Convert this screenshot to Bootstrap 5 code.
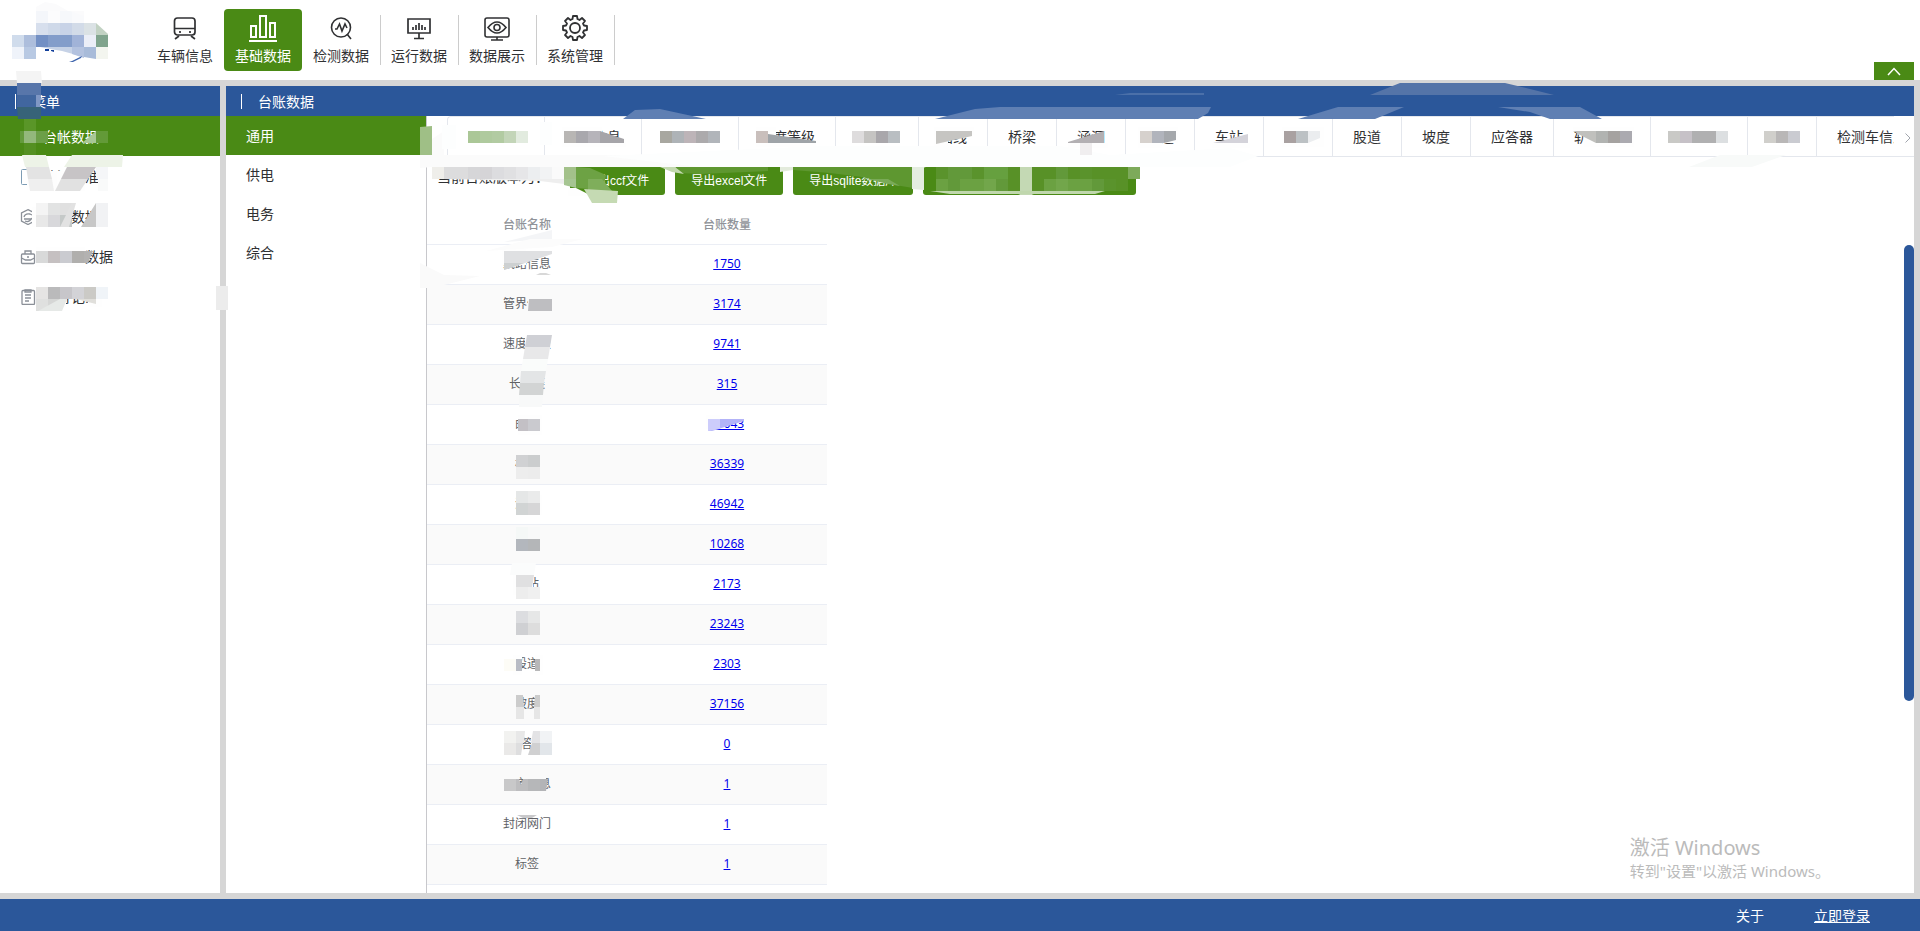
<!DOCTYPE html>
<html lang="zh-CN">
<head>
<meta charset="utf-8">
<meta name="viewport" content="width=device-width, initial-scale=1">
<title>台账数据</title>
<link rel="stylesheet" href="https://cdn.jsdelivr.net/npm/bootstrap@5.3.0/dist/css/bootstrap.min.css">
<style>
:root{--blue:#2b579a;--green:#4a8a15;--frame:#d6d6d6;--line:#e4e7ed}
body{font-family:"Noto Sans","Noto Sans CJK SC",sans-serif;font-size:14px;line-height:20px;color:#303133;background:#fff}
a{color:inherit;text-decoration:none}
.top-bar{height:80px;padding:9px 6px 0 146px}
.main-nav a{width:78px;height:62px;padding-top:5px;position:relative}
.main-nav a svg{width:28px;height:28px;margin-bottom:4px}
.main-nav a.on{background:var(--green);color:#fff;border-radius:4px}
.main-nav a.sep::after{content:"";position:absolute;right:-1px;top:6px;height:50px;width:1px;background:#ccc}
.fold-btn{width:40px;height:18px;background:var(--green)}
.work{background:var(--frame);padding:6px 6px 6px 0;gap:6px;min-height:0}
.side{width:220px}
.pane{min-width:0;min-height:0}
.panel-head{height:30px;background:var(--blue);color:#fff;padding:1px 0 0 15px}
.panel-head::before{content:"";width:1px;height:15px;background:#fff;margin-right:16px}
.side-link{height:40px;padding:2px 0 0 20px}
.side-link svg{width:16px;height:16px;margin-right:7px;color:#8b9098}
.side-link.on,.cat-link.on{background:var(--green);color:#fff}
.cats{width:201px;border-right:1px solid #c8c8cc}
.cat-link{height:39px;padding-left:20px}
.tabs{height:41px;padding:0 20px;border-bottom:1px solid var(--line)}
.tab-strip{border:1px solid var(--line);border-width:1px 0 0 1px;border-top-left-radius:4px}
.tab-strip a{padding:5px 20px 0;line-height:30px;white-space:nowrap;border-left:1px solid var(--line);flex:none}
.tab-strip a:first-child{border-left:0;min-width:96px}
.w4{min-width:97px}.w3{min-width:83px}.w2{min-width:69px}
.tab-more{right:2px;top:16px}
.tool-row{padding:10px 10px 0;height:47px}
.tool-row .ver{width:133px}
.act{height:28px;border:0;border-radius:3px;background:var(--green);color:#fff;font:12px/12px "Liberation Sans","Noto Sans CJK SC",sans-serif;padding:0 16px}
.act-m{width:98px}.act-l{width:105px}
.acts{gap:10px}
.ledger{width:400px;font-size:12px;color:#606266;table-layout:fixed}
.ledger th,.ledger td{height:40px;padding:0;text-align:center;vertical-align:middle;border-bottom:1px solid #ebeef5}
.ledger th{color:#909399;font-weight:500;padding-top:2px}
.ledger tbody tr:nth-child(even){background:#fafafa}
.ledger a{color:#00e;text-decoration:underline}
.thumb{width:10px;height:456px;border-radius:5px;background:var(--blue);right:0;top:159px}
.tip{right:84px;bottom:11px;color:#bbb;font-size:15px;line-height:22px}
.tip strong{display:block;font-size:20px;line-height:24px;font-weight:400}
.foot{height:32px;background:var(--blue);color:#fff;padding:2px 50px 0 0;gap:50px}
.foot a:last-child{text-decoration:underline}
.veil{left:0;top:0;width:1920px;height:931px;pointer-events:none;z-index:5}
</style>
</head>
<body class="vh-100 d-flex flex-column overflow-hidden position-relative">
<header class="top-bar d-flex justify-content-between flex-shrink-0">
  <nav class="main-nav d-flex text-center">
    <a href="#"><svg viewBox="0 0 28 28" fill="none" stroke="currentColor" stroke-width="1.700"><rect x="3.500" y="4" width="20.500" height="17" rx="3"/><path d="M4 14.500h20M8 22l-4 3M20 22l4 3"/><path d="M9 17v2M19 17v2"/></svg><br>车辆信息</a>
    <a href="#" class="on"><svg viewBox="0 0 28 28" fill="none" stroke="currentColor" stroke-width="2"><path d="M2 12h5v11H2zM11 2h6v21h-6zM21 9h5v14h-5zM0 27h28"/></svg><br>基础数据</a>
    <a href="#" class="sep"><svg viewBox="0 0 28 28" fill="none" stroke="currentColor" stroke-width="1.6"><circle cx="14" cy="13.500" r="9.500"/><path d="M8 15h2l2.500-5 2.500 7 3-7 2 4M20 20l4 5"/></svg><br>检测数据</a>
    <a href="#" class="sep"><svg viewBox="0 0 28 28" fill="none" stroke="currentColor" stroke-width="1.700"><path d="M3 5h22v14H3zM14 19v5M9 24.500h10M8 13v3M11 11v5M14 9v7M17 11v5M20 13v3"/></svg><br>运行数据</a>
    <a href="#" class="sep"><svg viewBox="0 0 28 28" fill="none" stroke="currentColor" stroke-width="1.600"><rect x="2" y="4" width="24" height="19" rx="2"/><path d="M14 23v3M8 26h12M5 13.500q9-11 18 0q-9 11-18 0z"/><circle cx="14" cy="13.500" r="3"/></svg><br>数据展示</a>
    <a href="#" class="sep"><svg viewBox="0 0 28 28" fill="none" stroke="currentColor" stroke-width="1.800" stroke-linejoin="round"><path d="M11.500 5 12 2h4l.5 3 2 1 2.500-2 3 3-2 2.500 1 2 3 .5v4l-3 .5-1 2 2 2.500-3 3-2.500-2-2 1-.5 3h-4l-.5-3-2-1-2.500 2-3-3 2-2.500-1-2-3-.5v-4l3-.5 1-2-2-2.500 3-3 2.500 2z"/><circle cx="14" cy="14" r="5"/></svg><br>系统管理</a>
  </nav>
  <button class="fold-btn border-0 p-0 align-self-end d-flex align-items-center justify-content-center" aria-label="收起"><svg width="16" height="10" fill="none" stroke="#fff" stroke-width="1.500"><path d="m2 9 6-6.500L14 9"/></svg></button>
</header>

<main class="work d-flex flex-grow-1">
  <aside class="side bg-white flex-shrink-0">
    <div class="panel-head d-flex align-items-center">菜单</div>
    <a href="#" class="side-link on d-flex align-items-center"><svg></svg>台帐数据</a>
    <a href="#" class="side-link d-flex align-items-center"><svg viewBox="0 0 16 16" fill="none" stroke="#7d9cb4"><rect x="1.500" y=".5" width="12" height="15" rx="1"/></svg>检测标准</a>
    <a href="#" class="side-link d-flex align-items-center"><svg viewBox="0 0 16 16" fill="none" stroke="currentColor" stroke-width="1.300"><path d="M8 .7 14.500 4v8L8 15.500 1.500 12V4zM4 8q1-4 6-3l2 1M4 10h7M5 12q4 2 7-3"/></svg>检修数据</a>
    <a href="#" class="side-link d-flex align-items-center"><svg viewBox="0 0 16 16" fill="none" stroke="currentColor" stroke-width="1.300"><rect x="1.500" y="5" width="13" height="9.500" rx="1"/><path d="M5 5V2h6v3M1.500 9l4 2h5l4-2M7 8h2"/></svg>动检车数据</a>
    <a href="#" class="side-link d-flex align-items-center"><svg viewBox="0 0 16 16" fill="none" stroke="currentColor" stroke-width="1.300"><rect x="2" y="1.500" width="12.500" height="14" rx="1"/><path d="M5 1h6v2H5zM5 6h6M5 9h6M5 12h4"/></svg>运行记录</a>
  </aside>
  <section class="pane bg-white flex-grow-1 d-flex flex-column position-relative">
    <div class="panel-head d-flex align-items-center flex-shrink-0">台账数据</div>
    <div class="pane d-flex flex-grow-1">
      <nav class="cats flex-shrink-0">
        <a href="#" class="cat-link on d-flex align-items-center">通用</a>
        <a href="#" class="cat-link d-flex align-items-center">供电</a>
        <a href="#" class="cat-link d-flex align-items-center">电务</a>
        <a href="#" class="cat-link d-flex align-items-center">综合</a>
      </nav>
      <div class="pane flex-grow-1 overflow-hidden">
        <div class="tabs position-relative">
          <nav class="tab-strip d-flex overflow-hidden h-100">
            <a href="#" aria-label="总览"></a><a href="#">管界信息</a><a href="#" class="w4" aria-label="线路"></a><a href="#">速度等级</a><a href="#" class="w3" aria-label="长短链"></a><a href="#">曲线</a><a href="#">桥梁</a><a href="#">涵洞</a><a href="#">隧道</a><a href="#">车站</a><a href="#">道岔</a><a href="#">股道</a><a href="#">坡度</a><a href="#">应答器</a><a href="#">轨道信息</a><a href="#" class="w4" aria-label="封闭网门"></a><a href="#" class="w2" aria-label="标签"></a><a href="#">检测车信息</a>
          </nav>
          <svg class="tab-more position-absolute" width="8" height="12" fill="none" stroke="#a0a4ac"><path d="m1.500 1.500 4.500 4.500-4.500 4.500"/></svg>
        </div>
        <div class="tool-row d-flex align-items-start">
          <span class="ver">当前台账版本为：</span>
          <div class="acts d-flex">
            <button class="act">导出ccf文件</button><button class="act">导出excel文件</button><button class="act">导出sqlite数据库</button><button class="act act-m" aria-label="导入"></button><button class="act act-l" aria-label="更新"></button>
          </div>
        </div>
        <table class="ledger">
          <thead><tr><th>台账名称</th><th>台账数量</th></tr></thead>
          <tbody>
            <tr><td>线路信息</td><td><a href="#">1750</a></td></tr>
            <tr><td>管界信息</td><td><a href="#">3174</a></td></tr>
            <tr><td>速度等级</td><td><a href="#">9741</a></td></tr>
            <tr><td>长短链</td><td><a href="#">315</a></td></tr>
            <tr><td>曲线</td><td><a href="#">27643</a></td></tr>
            <tr><td>桥梁</td><td><a href="#">36339</a></td></tr>
            <tr><td>涵洞</td><td><a href="#">46942</a></td></tr>
            <tr><td>隧道</td><td><a href="#">10268</a></td></tr>
            <tr><td>车站</td><td><a href="#">2173</a></td></tr>
            <tr><td>道岔</td><td><a href="#">23243</a></td></tr>
            <tr><td>股道</td><td><a href="#">2303</a></td></tr>
            <tr><td>坡度</td><td><a href="#">37156</a></td></tr>
            <tr><td>应答器</td><td><a href="#">0</a></td></tr>
            <tr><td>轨道信息</td><td><a href="#">1</a></td></tr>
            <tr><td>封闭网门</td><td><a href="#">1</a></td></tr>
            <tr><td>标签</td><td><a href="#">1</a></td></tr>
          </tbody>
        </table>
      </div>
    </div>
    <div class="thumb position-absolute"></div>
    <div class="tip position-absolute"><strong>激活 Windows</strong>转到"设置"以激活 Windows。</div>
  </section>
</main>
<footer class="foot d-flex align-items-center justify-content-end flex-shrink-0"><a href="#">关于</a><a href="#">立即登录</a></footer>

<svg class="veil position-absolute" id="veil" aria-hidden="true"></svg>
<script src="https://cdn.jsdelivr.net/npm/bootstrap@5.3.0/dist/js/bootstrap.bundle.min.js"></script>
<script>
// Redaction layer, painted in order: plain cover boxes [x, y, w, h, colour],
// smears, runs of 12px mosaic cells [x, y, colours], then free polygons [colour, points].
const covers = [
 [31,84,9,22,'41669f'],[50,171,12,20,'fdfdfd'],[57,171,28,20,'fefefe'],[27,168,14,22,'fefefe'],
 [32,207,38,20,'fefefe'],[36,247,49,20,'fefefe'],[36,287,30,20,'fefefe'],[66,287,34,12,'fefefe'],[88,299,14,8,'fefefe'],
 [562,127,40,20,'fefefe'],[602,139,24,8,'fefefe'],[756,127,20,20,'fefefe'],[776,141,40,6,'fefefe'],[934,127,40,8,'fefefe'],[934,135,14,12,'fefefe'],
 [1068,143,40,5,'fefefe'],[1138,127,40,16,'fefefe'],[1138,143,24,5,'fefefe'],[1212,143,38,5,'fefefe'],[1282,127,42,20,'fefefe'],[1584,127,50,20,'fefefe'],[1573,127,11,4,'fefefe'],
 [502,249,24,16,'fefefe'],[528,297,25,18,'fafafa'],[525,337,25,18,'fefefe'],[520,377,23,16,'fafafa'],[518,415,24,20,'fefefe'],[706,415,14,14,'fefefe'],
 [517,455,26,20,'fafafa'],[516,495,26,20,'fefefe'],[513,535,28,20,'fafafa'],[513,575,20,20,'fefefe'],[513,615,28,20,'fafafa'],
 [513,655,9,20,'fefefe'],[535,655,8,20,'fefefe'],[513,695,10,20,'fafafa'],[535,695,8,20,'fafafa'],[507,735,15,20,'fefefe'],[531,735,18,20,'fefefe'],
 [501,775,18,20,'fafafa'],[519,785,27,10,'fafafa'],[523,775,23,12,'fafafa']
];
const smears = [
 ['fbfbfb','432,139 444,131 444,155 700,155 1100,155 1230,160 1200,167 432,167 420,168 420,155 432,155'],
 ['fdfefe','603,156 820,146 1060,146 1110,155 1230,148 1258,156 1230,167 700,167'],['fdfefe','442,125 456,125 456,149 442,149'],['fdfefe','540,122 552,122 552,145 540,145']
];
const cells = [
 [36,11,'f4f6fa fcfcfd f6f8fb f9fafc'],[36,23,'d7dfed cfd9e9 c8d3e7 d2dbe8 dbe2e5'],
 [12,35,'d0dcec adbedc 7390c4 839dca 839dca a1b3d8 ebeef7 80a48d'],[12,47,'eff3fa b8c9e3'],[96,47,'f3f5ef'],
 [24,119,'5a9628'],[24,131,'93b87c 6c9f48'],[24,143,'549022'],[96,131,'639a38'],
 [96,167,'f5f6f8'],[36,203,'f4f4f4 e2e3e3 e0e0e0'],[36,215,'e8e8e8 d8d8db c5c9c8'],[96,203,'f1f2f4'],[96,215,'f1f2f4'],
 [36,251,'d8d9d9 c5c0c1 cacbd0 b0afad'],[36,287,'e5e4e3 bababb c7c6ca d3d3d7 cbcac6 f0f4f8'],[36,299,'dfe0df d5d6d5'],
 [468,131,'abc797 afca9e b2cba2 c3d5b8 e2ebdf'],[564,131,'b8b6b4 a9a8ad b6b4ba'],[660,131,'a8a7a0 aeb3b7 bdb4b8 acaaac b1b5ba'],
 [756,131,'c9bfbc'],[852,131,'dedcdd c5c4c2 a9a7ab b9bec2'],[1080,143,'f0eeef'],[1140,131,'d6d1cd b1b4bc'],
 [1284,131,'a9a1a1 bcc1c4'],[1596,131,'b1b3b1 a5a2a0 abaab0'],[1668,131,'c9c9c6 c6c1c7 b0b0b1 b0b0b1 dcdfe1'],[1764,131,'d0cfcb b9b7b7 cacbd1'],
 [432,167,'efeeea dcdcdd dcdcdd d6d6d8 d5d4d7 dcdcdf e0e0e2 e6e6e8 eceef0 f2f3f4 fafafa a3c18a'],
 [936,167,'5a932c 62993a 62993a 5a932c 66a03f 66a03f 589127'],[936,179,'6ba142 62993a 6ba142 6ba142 72a64b 62993a 589127'],
 [1044,167,'589127 62993a 589127 5a932c 589127 589127 589127 7daa5a'],[1044,179,'6ba142 72a64b 6ba142 6ba142 62993a 5a932c 589127'],
 [516,455,'d0d1d3 cbcdce'],[516,467,'ededed ececec'],[516,491,'e5e7e7 eaebeb'],[516,503,'d1d4d4 d6d6d7'],
 [516,527,'f5f8f7 f8f9f9'],[516,539,'b3b7bd b4b6b8'],[516,587,'ededed f0f0f0'],[516,611,'dcdde0 e6e7e7'],[516,623,'cfd0d3 dddddd'],
 [504,659,'fdfcf6'],[504,731,'f2f2f0'],[504,743,'eae9e8'],[540,731,'f1f3f5'],[540,743,'e2e6ea'],[504,779,'c8c8c9'],[528,779,'b6b7b9']
];
const polys = [
 ['fbfbfc','36,11 36,7 45,2 56,4 68,11'],['fbfbfc','84,23 84,16 70,11 84,11'],['c2d2c3','96,23 108,34 108,35 96,35'],
 ['c6d2e6','40,47 84,47 84,57 62,51 50,49'],['b3c2df','72,47 84,47 84,58 72,54'],['a8bbd9','84,47 96,47 96,59 84,57'],
 ['123f9b','45,49 49,49 49,51 45,51'],['123f9b','51,50 54,50 54,52 51,51'],['3d63ac','69,62 72,61 82,56 81,58 73,62'],
 ['f4f4f4','16,71 41,71 42,83 17,83'],['5876aa','17,83 41,83 41,95 17,95'],['41669f','17,95 36,95 36,107 17,107'],['8097c4','36,95 41,95 40,107 36,107'],['376378','17,107 41,107 41,119 18,119'],
 ['649b3c','20,131 24,131 24,143 20,143'],['a8c796','96,131 96,143 82,143'],
 ['edf3e7','22,155 46,155 49,167 25,167'],['edf3e7','72,155 123,155 122,167 64,167'],['e3e3e3','26,167 49,167 52,179 28,179'],
 ['c7c4c6','67,167 96,167 88,179 61,179'],['efefef','28,179 52,179 54,191 30,191'],['e1e1e1','61,179 88,179 80,191 55,191'],['f9fafa','98,179 108,179 108,191 98,191'],
 ['e2e2e2','72,203 76,203 69,227 60,227'],['c7c7c7','96,203 96,227 81,227'],['b3b2b1','84,251 93,251 88,263 84,263'],['e6e9e7','60,299 67,299 62,311 38,311'],
 ['e0dfdb','76,299 96,299 96,304 84,301'],
 ['ececec','216,286 228,286 228,310 216,310'],['9fbf86','420,127 432,126 432,155 420,155'],
 ['f8faf9','1689,167 1720,155 1786,155 1752,167'],['fafafa','420,263 444,275 480,276 432,288 420,288'],
 ['5f7fb3','623,119 635,110 660,109 706,119'],['5f7fb3','935,119 975,109 1000,107 1211,107 1208,113 1198,119'],['4b70a9','1115,95 1130,93 1204,93 1204,95'],
 ['5474a8','1370,95 1400,83 1505,83 1530,89 1554,95'],['5f7fb3','1298,119 1338,107 1404,107 1375,119'],['5f7fb3','1498,107 1580,107 1602,119 1550,119 1530,112'],
 ['a6a5a9','600,131 624,139 624,143 600,143'],['9fa4a8','768,134 816,141 816,143 768,143'],['c6c5c2','936,131 972,131 972,136 936,144'],
 ['b3b0b3','1068,142 1104,131 1104,143 1068,143'],['a5a8ac','1164,131 1176,131 1176,140 1164,143'],['d4d3da','1213,143 1248,134 1248,143'],['ebedef','1308,131 1320,131 1320,138 1308,143'],
 ['c0c0bd','1573,131 1596,131 1596,143 1584,137'],
 ['eeeeee','444,179 564,179 564,184 540,181 490,180'],['6da244','576,167 590,168 606,175 604,185 612,191 576,188'],['a6c592','564,179 576,179 576,188 564,185'],['7fae5b','588,179 602,179 612,191 588,191'],['fefefe','568,188 576,188 592,196 568,196'],['c5dab3','584,189 618,191 617,203 592,203'],
 ['5e9730','675,167 768,167 768,171 700,174 680,173'],['c3d9b0','660,167 675,167 684,174 672,172'],['e3ebdc','780,167 793,167 793,170 780,172'],
 ['5e9730','793,167 913,167 913,188 895,185 862,177 830,173 793,170'],['7aaa57','864,179 888,179 900,186 888,184 864,178'],['e4ede0','912,167 924,167 924,190 912,189'],['c4d9b4','1020,167 1032,167 1032,195 1020,195'],['589127','1032,167 1044,167 1044,191 1032,191'],
 ['c0d7ad','930,191 1105,191 1095,194 950,194'],
 ['f4f5f7','504,242 552,230 552,239'],['fcfcfc','486,251 530,239 583,239 552,247'],['dfe0e2','504,251 552,251 552,254 504,270'],['cdd0d1','504,263 524,263 504,270'],['d8d8d8','536,275 540,273 546,273 551,275'],
 ['bebec1','529,299 552,299 552,311 528,311'],['cfd0d5','527,335 552,335 550,347 525,347'],['e8e8e9','525,347 550,347 548,359 523,359'],['fafcfb','523,359 548,359 546,371 521,371'],
 ['e3e5e6','521,371 546,371 544,383 520,383'],['d2d4d4','520,383 544,383 543,395 519,395'],['f8f9f9','519,395 543,395 542,407 519,407'],['c3c0c5','518,419 528,419 528,431 518,431'],['cacacf','528,419 540,419 540,431 528,431'],
 ['b3b3f8','708,419 744,419 744,421 712,431 708,431'],['cdcdfb','708,419 720,419 720,429 708,431'],['fbfcfc','512,563 536,563 534,575 510,575'],['e0e0e1','516,575 534,575 532,587 516,587'],
 ['b9bcc4','516,659 522,659 522,671 516,671'],['b8b8b9','535,659 540,659 540,671 535,671'],['cccccc','516,695 523,695 524,707 516,707'],['e6e6e6','516,707 524,707 524,719 516,719'],['cccccc','535,695 540,695 540,707 534,707'],['e6e6e6','534,707 540,707 540,719 534,719'],
 ['e8e8e8','516,731 525,731 524,743 516,743'],['dededf','516,743 523,743 521,755 516,755'],['e3e3e5','533,731 540,731 540,743 531,743'],['d0d0d1','532,743 540,743 540,755 528,755'],
 ['bdbdbf','516,779 519,779 521,785 523,779 528,779 528,791 516,791'],['b3b4b7','540,779 548,779 546,791 540,791'],['c9c9cb','517,815 537,815 532,818 523,818']
];
const rect = (x, y, w, h, c) => `<rect x="${x}" y="${y}" width="${w}" height="${h}" fill="#${c}"/>`;
const poly = ([c, p]) => `<polygon points="${p}" fill="#${c}"/>`;
document.getElementById('veil').innerHTML =
  covers.map(c => rect(...c)).join('') +
  smears.map(poly).join('') +
  cells.map(([x, y, s]) => s.split(' ').map((c, i) => rect(x + i * 12, y, 12, 12, c)).join('')).join('') +
  polys.map(poly).join('');
</script>
</body>
</html>
